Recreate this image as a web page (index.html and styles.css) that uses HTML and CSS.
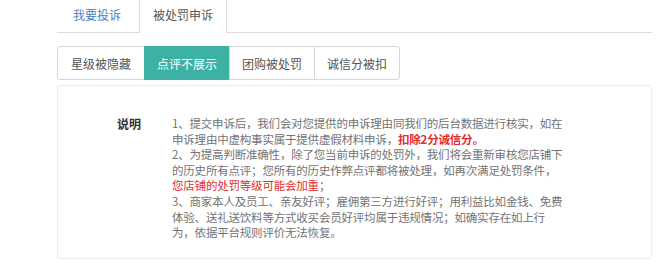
FILE: index.html
```html
<!DOCTYPE html>
<html lang="zh-CN">
<head>
    <meta charset="UTF-8">
    <title>被处罚申诉</title>
    <link rel="stylesheet" href="styles.css">
</head>
<body>
    <div class="page">
        <!-- Top tabs -->
        <ul class="nav-tabs">
            <li><a href="#">我要投诉</a></li>
            <li class="active"><a href="#">被处罚申诉</a></li>
        </ul>

        <!-- Penalty type switch -->
        <div class="btn-group">
            <button>星级被隐藏</button>
            <button class="active">点评不展示</button>
            <button>团购被处罚</button>
            <button>诚信分被扣</button>
        </div>

        <!-- Notice -->
        <div class="panel">
            <div class="label">说明</div>
            <div class="notice">
                1、提交申诉后，我们会对您提供的申诉理由同我们的后台数据进行核实，如在<br>
                申诉理由中虚构事实属于提供虚假材料申诉，<span class="warn bold">扣除2分诚信分。</span><br>
                2、为提高判断准确性，除了您当前申诉的处罚外，我们将会重新审核您店铺下<br>
                的历史所有点评；您所有的历史作弊点评都将被处理，如再次满足处罚条件，<br>
                <span class="warn">您店铺的处罚等级可能会加重</span>；<br>
                3、商家本人及员工、亲友好评；雇佣第三方进行好评；用利益比如金钱、免费<br>
                体验、送礼送饮料等方式收买会员好评均属于违规情况；如确实存在如上行<br>
                为，依据平台规则评价无法恢复。
            </div>
        </div>
    </div>
</body>
</html>
```

FILE: styles.css
```css
body {
    margin: 0;
    background: #fff;
    font-family: "Noto Sans CJK SC", "Noto Sans", sans-serif;
    font-size: 12px;
    color: #666;
}

.page {
    width: 595px;
    margin-left: 57px;
}

/* Top tabs */
.nav-tabs {
    display: flex;
    gap: 2px;
    list-style: none;
    margin: -5px 0 0;
    padding: 0;
    border-bottom: 1px solid #ddd;
}

.nav-tabs li {
    margin-bottom: -1px;
}

.nav-tabs a {
    display: block;
    box-sizing: border-box;
    height: 38px;
    line-height: 38px;
    padding: 0 15px;
    color: #4a83c0;
    text-decoration: none;
    border: 1px solid transparent;
    border-bottom: none;
}

.nav-tabs .active a {
    color: #555;
    background: #fff;
    border-color: #ddd;
    border-radius: 3px 3px 0 0;
    padding: 0 13px;
}

/* Switch buttons */
.btn-group {
    display: flex;
    margin-top: 13px;
}

.btn-group button {
    width: 86px;
    height: 34px;
    margin-left: -1px;
    padding: 0;
    font-family: inherit;
    font-size: 12px;
    color: #555;
    background: #fff;
    border: 1px solid #d6d6d6;
    cursor: pointer;
}

.btn-group button:first-child {
    margin-left: 0;
    width: 88px;
    border-radius: 3px 0 0 3px;
}

.btn-group button:last-child {
    border-radius: 0 3px 3px 0;
}

.btn-group button.active {
    color: #fff;
    background: #3db2a4;
    border-color: #3db2a4;
}

/* Notice panel */
.panel {
    display: flex;
    gap: 31px;
    margin-top: 5px;
    padding: 30px 0 17px 59px;
    border: 1px solid #ececec;
    border-radius: 3px;
    box-shadow: 0 1px 2px rgba(0, 0, 0, 0.06);
}

.label {
    width: 24px;
    line-height: 15.6px;
    font-weight: bold;
    color: #333;
    white-space: nowrap;
}

.notice {
    font-size: 11.5px;
    line-height: 15.6px;
    letter-spacing: -0.2px;
    white-space: nowrap;
    color: #737373;
}

.warn {
    color: #e0302f;
}

.bold {
    font-weight: bold;
}
```
